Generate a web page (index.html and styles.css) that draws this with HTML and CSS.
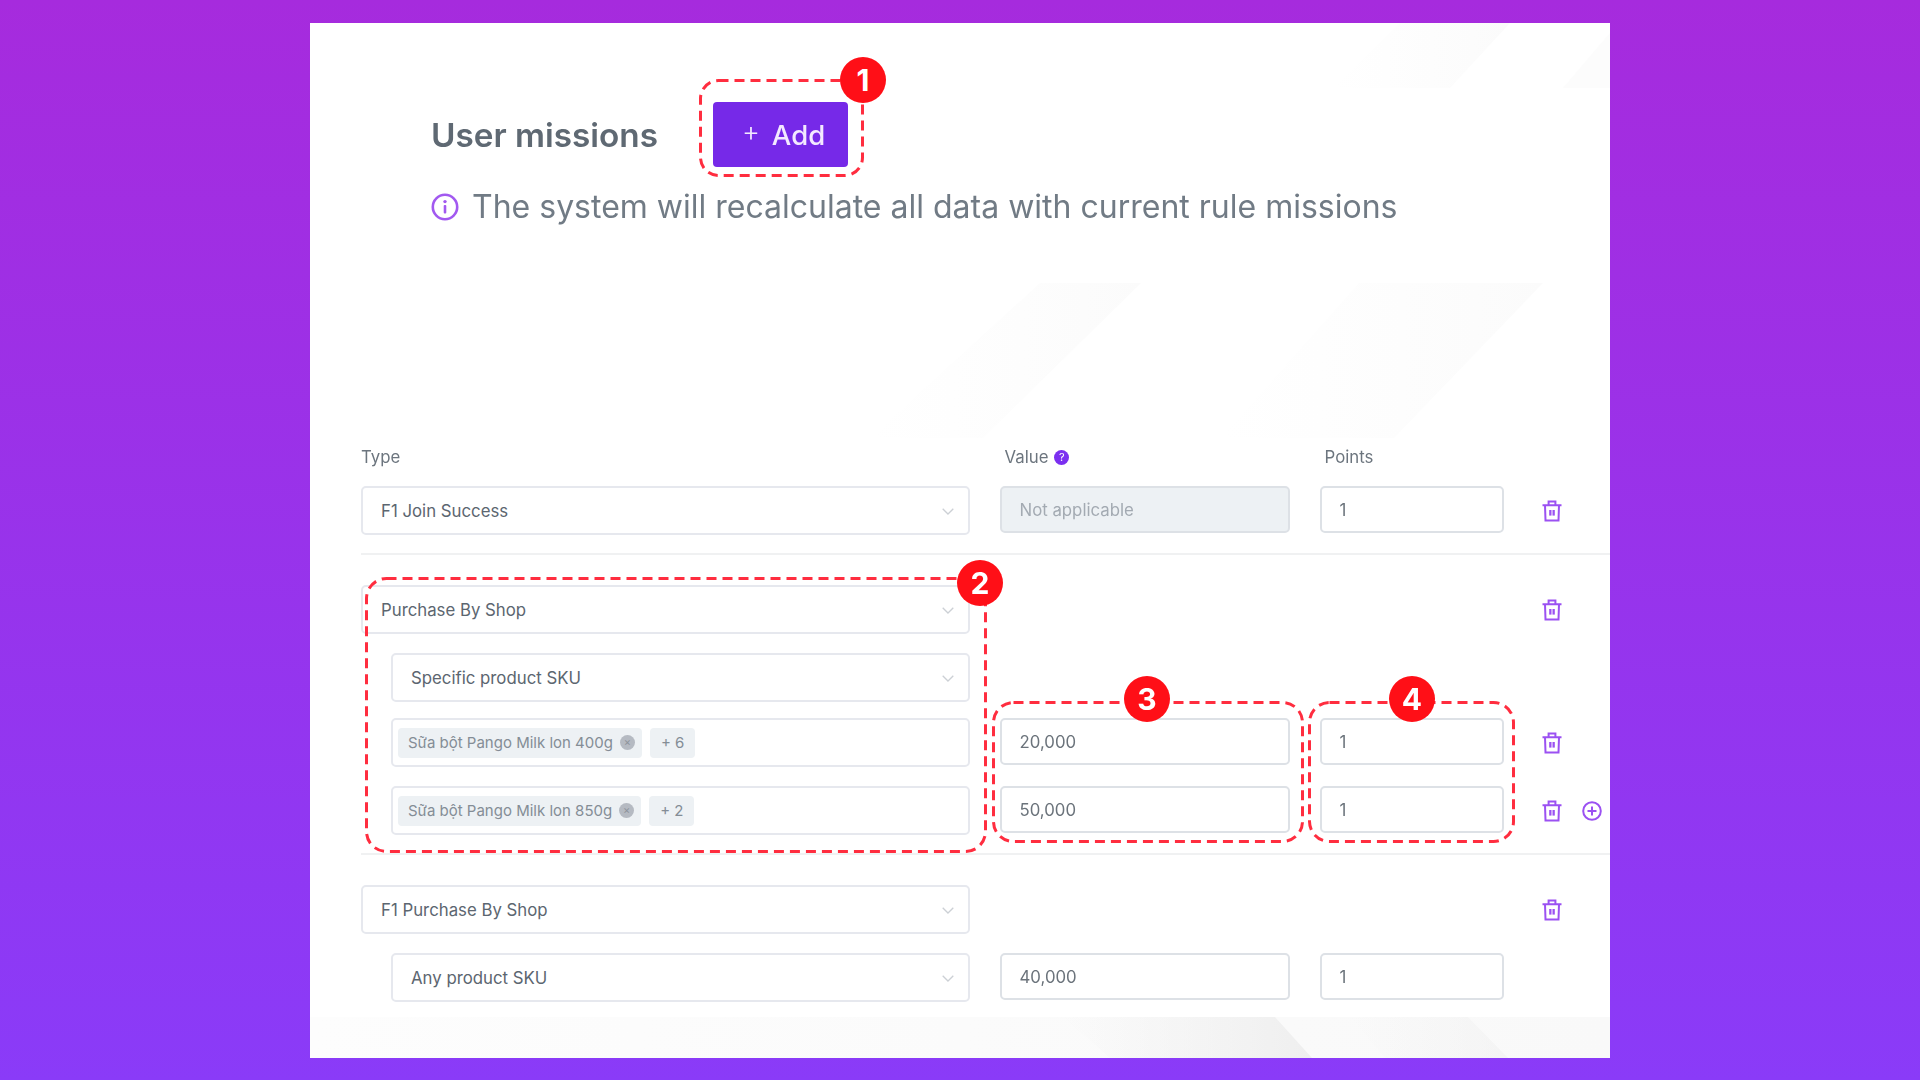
FILE: index.html
```html
<!DOCTYPE html>
<html lang="en">
<head>
  <meta charset="UTF-8">
  <title>User missions</title>
  <link rel="stylesheet" href="styles.css">
</head>
<body>
  <div class="card">
    <svg class="card-bg" width="1300" height="1035" viewBox="0 0 1300 1035">
      <defs>
        <linearGradient id="fade" x1="0" y1="0" x2="1" y2="0">
          <stop offset="0" stop-color="#fcfcfc" stop-opacity="0"/>
          <stop offset="1" stop-color="#fbfbfb"/>
        </linearGradient>
        <linearGradient id="fade-dark" x1="0" y1="0" x2="1" y2="0">
          <stop offset="0" stop-color="#f0f0f0" stop-opacity="0"/>
          <stop offset="1" stop-color="#efefef"/>
        </linearGradient>
        <linearGradient id="band" x1="0" y1="0" x2="1" y2="0">
          <stop offset="0" stop-color="#fdfdfd"/>
          <stop offset="1" stop-color="#f9f9f9"/>
        </linearGradient>
      </defs>
      <polygon points="673,415 831,260 730,260 560,415" fill="url(#fade)"/>
      <polygon points="911,415 1049,260 1233,260 1084,415" fill="url(#fade)"/>
      <polygon points="1022,65 1090,0 1200,0 1140,65" fill="url(#fade)"/>
      <polygon points="1253,65 1300,10 1300,65" fill="#fcfcfc"/>
      <rect x="0" y="994" width="1300" height="41" fill="url(#band)"/>
      <polygon points="753,994 965,994 1002,1035 800,1035" fill="url(#fade-dark)"/>
      <polygon points="1040,994 1158,994 1198,1035 1075,1035" fill="url(#fade-dark)" opacity=".5"/>
    </svg>

    <div class="intro">
      <div class="intro-title">
        <h1>User missions</h1>
        <button class="add-btn"><span class="add-plus">+</span>Add</button>
      </div>
      <p class="intro-note">
        <svg class="note-icon" width="28" height="28" viewBox="0 0 28 28" fill="none">
          <circle cx="14" cy="14" r="12.2" stroke="#a259f0" stroke-width="2.6"/>
          <rect x="12.7" y="12" width="2.6" height="8.5" rx="1" fill="#a259f0"/>
          <circle cx="14" cy="8.6" r="1.7" fill="#a259f0"/>
        </svg>
        The system will recalculate all data with current rule missions
      </p>
    </div>

    <div class="missions">
      <div class="grid labels">
        <label>Type</label>
        <label class="value-label">Value <span class="help">?</span></label>
        <label class="points-label">Points</label>
      </div>

      <div class="group">
        <div class="grid">
          <div class="select">F1 Join Success<svg class="chev" width="12" height="7" viewBox="0 0 12 7"><path d="M.7.7 6 6 11.3.7"/></svg></div>
          <div class="input disabled">Not applicable</div>
          <div class="input">1</div>
          <div class="actions"><svg class="trash" width="20" height="22" viewBox="0 0 20 22"><use href="#trash-icon"/></svg></div>
        </div>
      </div>

      <div class="group">
        <div class="grid">
          <div class="select">Purchase By Shop<svg class="chev" width="12" height="7" viewBox="0 0 12 7"><path d="M.7.7 6 6 11.3.7"/></svg></div>
          <div></div>
          <div></div>
          <div class="actions"><svg class="trash" width="20" height="22" viewBox="0 0 20 22"><use href="#trash-icon"/></svg></div>
        </div>
        <div class="grid">
          <div class="select nested">Specific product SKU<svg class="chev" width="12" height="7" viewBox="0 0 12 7"><path d="M.7.7 6 6 11.3.7"/></svg></div>
        </div>
        <div class="grid tight">
          <div class="select nested tags"><span class="tag">Sữa bột Pango Milk lon 400g <i class="tag-x">×</i></span><span class="tag tag-more">+ 6</span></div>
          <div class="input">20,000</div>
          <div class="input">1</div>
          <div class="actions"><svg class="trash" width="20" height="22" viewBox="0 0 20 22"><use href="#trash-icon"/></svg></div>
        </div>
        <div class="grid tight">
          <div class="select nested tags"><span class="tag">Sữa bột Pango Milk lon 850g <i class="tag-x">×</i></span><span class="tag tag-more">+ 2</span></div>
          <div class="input">50,000</div>
          <div class="input">1</div>
          <div class="actions">
            <svg class="trash" width="20" height="22" viewBox="0 0 20 22"><use href="#trash-icon"/></svg>
            <svg class="plus-circle" width="20" height="20" viewBox="0 0 20 20" fill="none"><circle cx="10" cy="10" r="8.8"/><path d="M10 5.5v9M5.5 10h9"/></svg>
          </div>
        </div>
      </div>

      <div class="group last">
        <div class="grid">
          <div class="select">F1 Purchase By Shop<svg class="chev" width="12" height="7" viewBox="0 0 12 7"><path d="M.7.7 6 6 11.3.7"/></svg></div>
          <div></div>
          <div></div>
          <div class="actions"><svg class="trash" width="20" height="22" viewBox="0 0 20 22"><use href="#trash-icon"/></svg></div>
        </div>
        <div class="grid">
          <div class="select nested">Any product SKU<svg class="chev" width="12" height="7" viewBox="0 0 12 7"><path d="M.7.7 6 6 11.3.7"/></svg></div>
          <div class="input">40,000</div>
          <div class="input">1</div>
        </div>
      </div>
    </div>

    <!-- numbered callouts over the form -->
    <div class="callout c1">
      <svg width="165" height="98"><rect x="1.5" y="1.5" width="162" height="95" rx="18"/></svg>
      <span class="num">1</span>
    </div>
    <div class="callout c2">
      <svg width="622" height="276"><rect x="1.5" y="1.5" width="619" height="273" rx="20"/></svg>
      <span class="num">2</span>
    </div>
    <div class="callout c3">
      <svg width="312" height="142"><rect x="1.5" y="1.5" width="309" height="139" rx="20"/></svg>
      <span class="num">3</span>
    </div>
    <div class="callout c4">
      <svg width="207" height="142"><rect x="1.5" y="1.5" width="204" height="139" rx="20"/></svg>
      <span class="num">4</span>
    </div>
  </div>

  <svg width="0" height="0" class="defs">
    <symbol id="trash-icon" viewBox="0 0 20 22">
      <path d="M.5 5.2h19M3 5.2l.5 15.3h13L17 5.2M6.6 5V1.6h6.8V5" fill="none" stroke="#9b51f2" stroke-width="2"/>
      <rect x="7.2" y="10" width="2.3" height="5.6" fill="#9b51f2"/>
      <rect x="10.5" y="10" width="2.3" height="5.6" fill="#9b51f2"/>
    </symbol>
  </svg>
</body>
</html>
```

FILE: styles.css
```css
body {
  margin: 0;
  height: 1080px;
  overflow: hidden;
  background: linear-gradient(180deg, #a62bdd 0%, #8a3bf8 100%);
  font-family: 'Inter', 'Liberation Sans', sans-serif;
  color: #5c6670;
}
.defs {
  position: absolute;
}

/* === CARD === */
.card {
  position: relative;
  box-sizing: border-box;
  width: 1300px;
  height: 1035px;
  margin: 23px 0 0 310px;
  padding: 79px 0 0 51px;
  background: #fff;
  overflow: hidden;
}
.card-bg {
  position: absolute;
  left: 0;
  top: 0;
}
.intro, .missions {
  position: relative;
  filter: blur(0.5px);
}

/* === INTRO === */
.intro {
  padding-left: 70px;
  height: 345px;
  filter: blur(0.7px);
}
.intro-title {
  display: flex;
  align-items: center;
  gap: 55px;
}
.intro-title h1 {
  margin: 0;
  font-size: 33.3px;
  font-weight: 600;
  color: #5f6973;
}
.add-btn {
  width: 135px;
  height: 65px;
  padding: 0 0 0 6px;
  border: none;
  border-radius: 4px;
  background: #7629e8;
  color: #f3e9ff;
  font-family: inherit;
  font-size: 27.5px;
  font-weight: 500;
}
.add-plus {
  margin-right: 12px;
  font-weight: 300;
  position: relative;
  top: -4px;
}
.intro-note {
  display: flex;
  align-items: center;
  gap: 13px;
  margin: 20px 0 0 0;
  font-size: 32px;
  color: #717b85;
}

/* === FORM === */
.missions {
  width: 1249px;
}
.grid {
  display: grid;
  grid-template-columns: 609px 290.5px 184px 1fr;
  column-gap: 29.5px;
  align-items: center;
}
.labels {
  font-size: 16.8px;
  color: #6c757e;
  margin-bottom: 19px;
  height: 20px;
}
.value-label {
  padding-left: 5px;
  display: flex;
  align-items: center;
  gap: 6px;
}
.points-label {
  padding-left: 5px;
}
.help {
  display: inline-block;
  width: 15px;
  height: 15px;
  border-radius: 50%;
  background: #7b2ff0;
  color: #fff;
  font-size: 11px;
  line-height: 15px;
  text-align: center;
}
.group {
  border-bottom: 2px solid #f0f1f2;
  padding-bottom: 18px;
  margin-bottom: 30px;
  margin-right: -51px;
}
.group .grid {
  margin-right: 51px;
  margin-bottom: 19px;
}
.group .grid:last-child {
  margin-bottom: 0;
}
.group .tight {
  margin-top: -3px;
}
.group .tight + .tight {
  margin-top: 2px;
}
.group.last {
  border-bottom: none;
}
.select, .input {
  box-sizing: border-box;
  display: flex;
  align-items: center;
  height: 49px;
  padding-left: 18px;
  border: 2px solid #e6e8ee;
  border-radius: 5px;
  background: #fff;
  font-size: 16.8px;
  color: #5c6670;
}
.select {
  position: relative;
}
.input {
  height: 47px;
  align-self: start;
  border-color: #dde1e6;
  color: #6b737b;
}
.input.disabled {
  background: #edf1f4;
  color: #a3aab2;
}
.nested {
  margin-left: 30px;
}
.chev {
  position: absolute;
  right: 14px;
  top: 20px;
  fill: none;
  stroke: #ccd0d5;
  stroke-width: 1.3;
}
.actions {
  display: flex;
  align-items: center;
  gap: 20px;
  padding-left: 9px;
}
.plus-circle circle, .plus-circle path {
  stroke: #9b51f2;
  stroke-width: 2;
}

/* === TAGS === */
.tags {
  padding-left: 5px;
  gap: 8px;
}
.tag {
  display: flex;
  align-items: center;
  gap: 7px;
  height: 30px;
  padding: 0 7px 0 10px;
  border-radius: 4px;
  background: #edf1f4;
  font-size: 15px;
  color: #848d96;
}
.tag-more {
  padding: 0 11px;
}
.tag-x {
  display: inline-block;
  width: 15px;
  height: 15px;
  border-radius: 50%;
  background: #b5bac2;
  color: #8d939c;
  font-size: 11px;
  font-style: normal;
  line-height: 15px;
  text-align: center;
}

/* === CALLOUTS === */
.callout {
  position: absolute;
}
.callout svg {
  display: block;
  fill: none;
  stroke: #ff2d3f;
  stroke-width: 3;
  stroke-dasharray: 10 6;
}
.num {
  position: absolute;
  display: flex;
  align-items: center;
  justify-content: center;
  width: 46px;
  height: 46px;
  border-radius: 50%;
  background: #ff0f17;
  color: #fff;
  font-size: 30px;
  font-weight: 700;
}
.c1 {
  left: 389px;
  top: 56px;
  width: 165px;
  height: 98px;
}
.c1 .num {
  left: 141px;
  top: -22px;
}
.c2 {
  left: 55px;
  top: 554px;
  width: 622px;
  height: 276px;
}
.c2 .num {
  right: -16px;
  top: -17px;
}
.c3 {
  left: 682px;
  top: 678px;
  width: 312px;
  height: 142px;
}
.c3 .num {
  left: 132px;
  top: -25px;
}
.c4 {
  left: 998px;
  top: 678px;
  width: 207px;
  height: 142px;
}
.c4 .num {
  left: 81px;
  top: -25px;
}
```
